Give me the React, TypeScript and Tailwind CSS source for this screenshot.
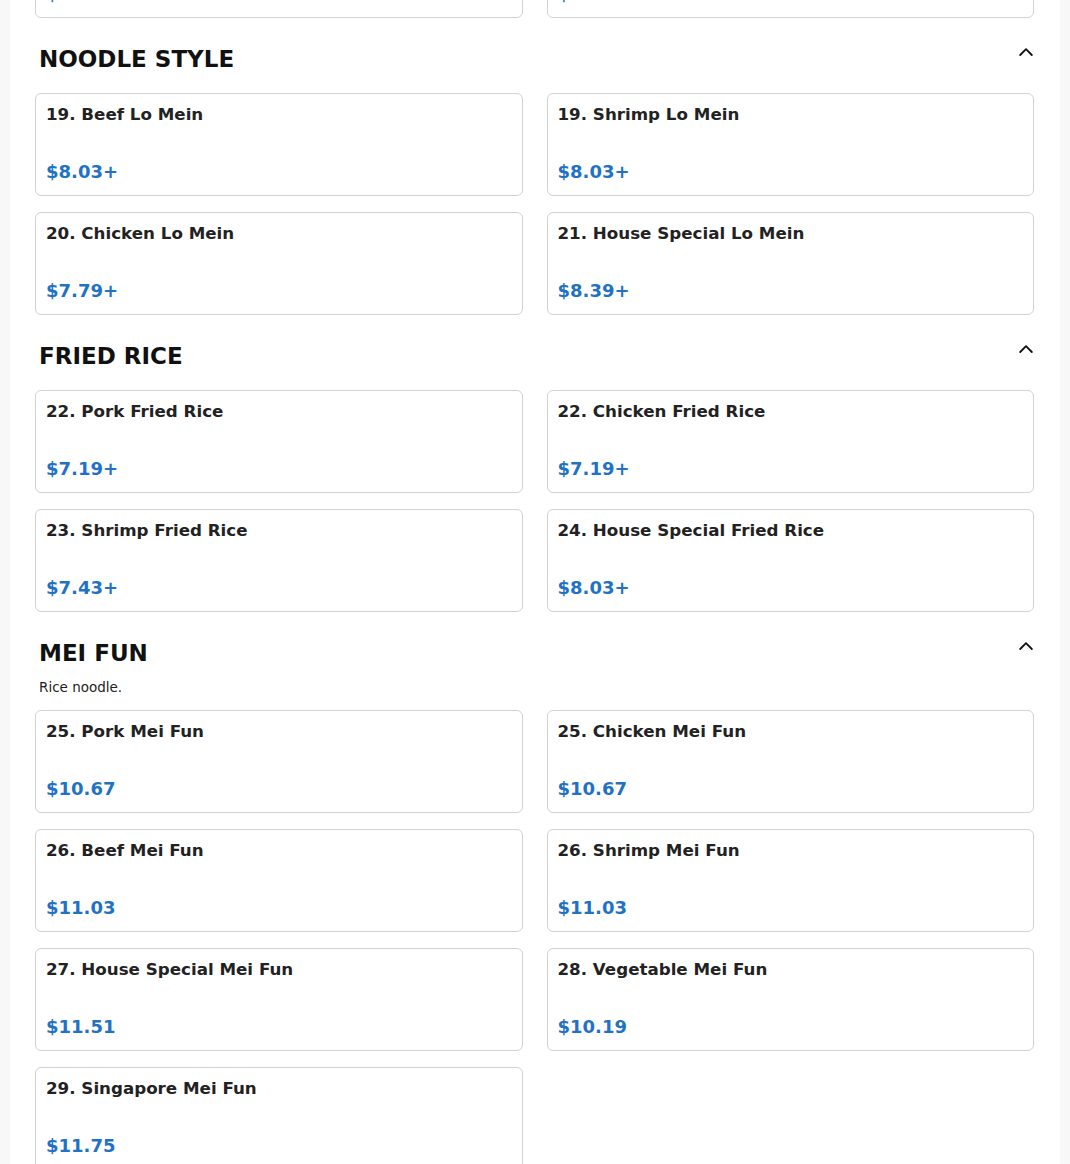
import React from "react";

type Item = { name: string; price: string };
type Section = { title: string; desc?: string; items: Item[] };

const sections: Section[] = [
  {
    title: "NOODLE STYLE",
    items: [
      { name: "19. Beef Lo Mein", price: "$8.03+" },
      { name: "19. Shrimp Lo Mein", price: "$8.03+" },
      { name: "20. Chicken Lo Mein", price: "$7.79+" },
      { name: "21. House Special Lo Mein", price: "$8.39+" },
    ],
  },
  {
    title: "FRIED RICE",
    items: [
      { name: "22. Pork Fried Rice", price: "$7.19+" },
      { name: "22. Chicken Fried Rice", price: "$7.19+" },
      { name: "23. Shrimp Fried Rice", price: "$7.43+" },
      { name: "24. House Special Fried Rice", price: "$8.03+" },
    ],
  },
  {
    title: "MEI FUN",
    desc: "Rice noodle.",
    items: [
      { name: "25. Pork Mei Fun", price: "$10.67" },
      { name: "25. Chicken Mei Fun", price: "$10.67" },
      { name: "26. Beef Mei Fun", price: "$11.03" },
      { name: "26. Shrimp Mei Fun", price: "$11.03" },
      { name: "27. House Special Mei Fun", price: "$11.51" },
      { name: "28. Vegetable Mei Fun", price: "$10.19" },
      { name: "29. Singapore Mei Fun", price: "$11.75" },
    ],
  },
];

function Card({ item }: { item: Item }) {
  return (
    <div className="flex h-[103px] flex-col justify-between rounded-md border border-[#d2d2d2] bg-white px-[10px] pt-[9px] pb-[12px]">
      <div className="text-[16.7px] leading-[22px] font-bold text-[#222222]">{item.name}</div>
      <div className="text-[18px] leading-[22px] font-bold text-[#1f72c4]">{item.price}</div>
    </div>
  );
}

function Chevron() {
  return (
    <svg width="14" height="10" viewBox="0 0 14 10" className="mt-[2px] mr-[1px]" fill="none">
      <path d="M1.2 8 L7 2.2 L12.8 8" stroke="#111" strokeWidth="1.8" strokeLinecap="round" strokeLinejoin="round" />
    </svg>
  );
}

export default function App() {
  return (
    <div
      className="min-h-screen bg-[#f8f8f8]"
      style={{ fontFamily: '"DejaVu Sans", "Liberation Sans", sans-serif' }}
    >
      <div className="mx-auto w-[1050px] bg-white pl-[25px] pr-[26px] pb-10">
        {/* previous section tail (scrolled off) */}
        <div className="-mt-[85px] grid grid-cols-2 gap-x-6 gap-y-4">
          <Card item={{ name: "18. Pork Chow Mein", price: "$8.03+" }} />
          <Card item={{ name: "18. Chicken Chow Mein", price: "$8.03+" }} />
        </div>
        {sections.map((s) => (
          <div key={s.title} className="pt-[27px]">
            <div className={`flex items-start justify-between ${s.desc ? "mb-[10px]" : "mb-[20px]"}`}>
              <h2 className="pl-1 text-[23px] leading-[28px] font-bold text-[#111111]">{s.title}</h2>
              <Chevron />
            </div>
            {s.desc && (
              <p className="mb-[13px] pl-1 text-[13.5px] leading-[20px] text-[#222222]">{s.desc}</p>
            )}
            <div className="grid grid-cols-2 gap-x-6 gap-y-4">
              {s.items.map((it) => (
                <Card key={it.name} item={it} />
              ))}
            </div>
          </div>
        ))}
      </div>
    </div>
  );
}
